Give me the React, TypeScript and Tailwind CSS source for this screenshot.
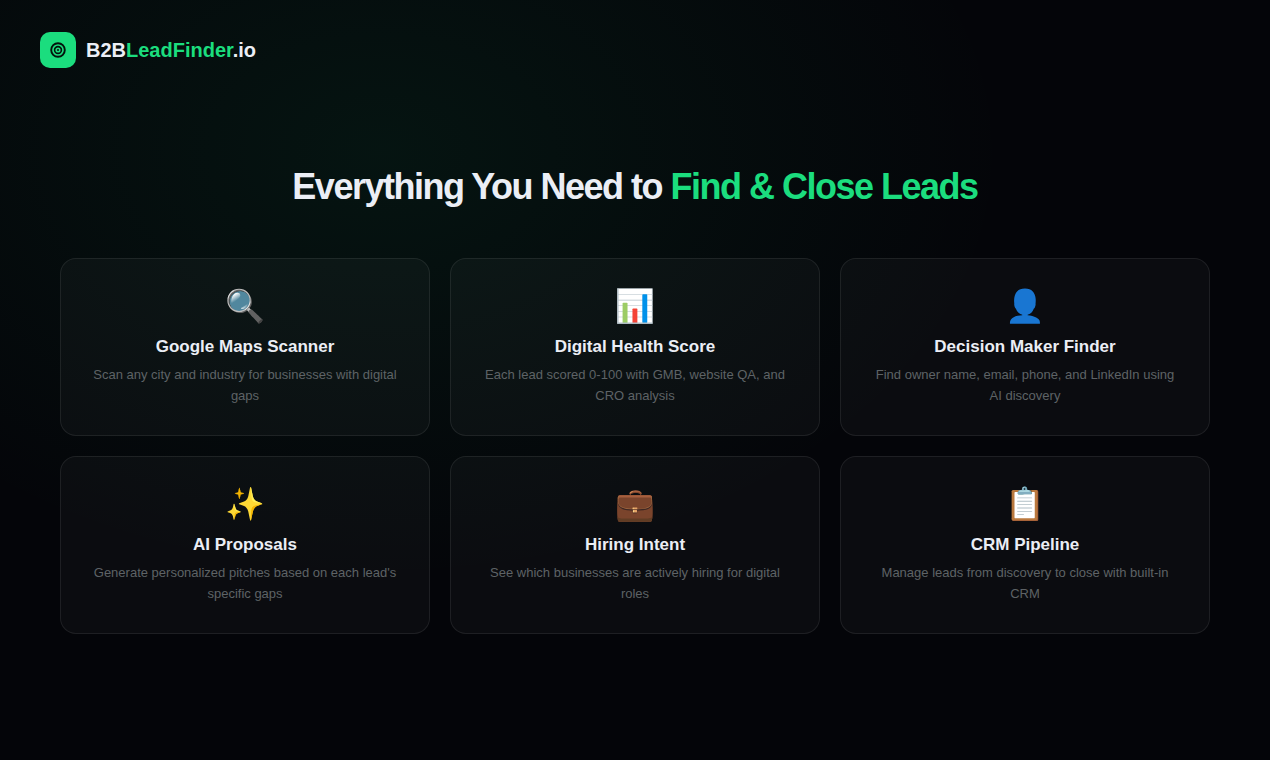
const features = [
    {
        icon: "🔍",
        title: "Google Maps Scanner",
        text: "Scan any city and industry for businesses with digital gaps",
    },
    {
        icon: "📊",
        title: "Digital Health Score",
        text: "Each lead scored 0-100 with GMB, website QA, and CRO analysis",
    },
    {
        icon: "👤",
        title: "Decision Maker Finder",
        text: "Find owner name, email, phone, and LinkedIn using AI discovery",
    },
    {
        icon: "✨",
        title: "AI Proposals",
        text: "Generate personalized pitches based on each lead's specific gaps",
    },
    {
        icon: "💼",
        title: "Hiring Intent",
        text: "See which businesses are actively hiring for digital roles",
    },
    {
        icon: "📋",
        title: "CRM Pipeline",
        text: "Manage leads from discovery to close with built-in CRM",
    },
]

const Logo = () => {
    return (
        <div className="flex items-center gap-2.5">
            <div className="flex size-9 items-center justify-center rounded-[10px] bg-[#1bdd7e]">
                <svg viewBox="0 0 16 16" className="size-4" fill="none" stroke="#03130c" aria-hidden="true">
                    <circle cx="8" cy="8" r="6.8" strokeWidth="1.9" />
                    <circle cx="8" cy="8" r="3.4" strokeWidth="1.6" />
                    <circle cx="8" cy="8" r="1" fill="#03130c" stroke="none" />
                </svg>
            </div>
            <span className="text-xl font-bold">
                B2B<span className="text-[#1bdd7e]">LeadFinder</span>.io
            </span>
        </div>
    )
}

const Features = () => {
    return (
        <section className="px-6 pt-24 pb-16 lg:px-[60px]">
            <h1 className="text-center text-4xl leading-[46px] font-bold tracking-[-1.5px]">
                Everything You Need to <span className="text-[#1bdd7e]">Find &amp; Close Leads</span>
            </h1>
            <div className="mx-auto mt-12 grid max-w-[1200px] grid-cols-1 gap-5 md:grid-cols-3">
                {features.map((feature) => (
                    <div
                        key={feature.title}
                        className="rounded-2xl border border-white/8 bg-white/3 px-7 pt-7 pb-[29px] text-center"
                    >
                        <div className="text-[32px] leading-[38px]">{feature.icon}</div>
                        <h2 className="mt-3 text-[17px] leading-[19px] font-bold">{feature.title}</h2>
                        <p className="mt-2 text-[13px] leading-[21px] text-[#5e6366]">{feature.text}</p>
                    </div>
                ))}
            </div>
        </section>
    )
}

const App = () => {
    return (
        <main className="min-h-screen bg-[#040509] bg-[radial-gradient(ellipse_at_30%_20%,rgba(22,219,126,0.07)_0%,transparent_50%)] font-['Liberation_Sans',Arial,'Noto_Color_Emoji',sans-serif] text-[#ebeef5]">
            <header className="px-10 pt-8">
                <Logo />
            </header>
            <Features />
        </main>
    )
}

export default App
